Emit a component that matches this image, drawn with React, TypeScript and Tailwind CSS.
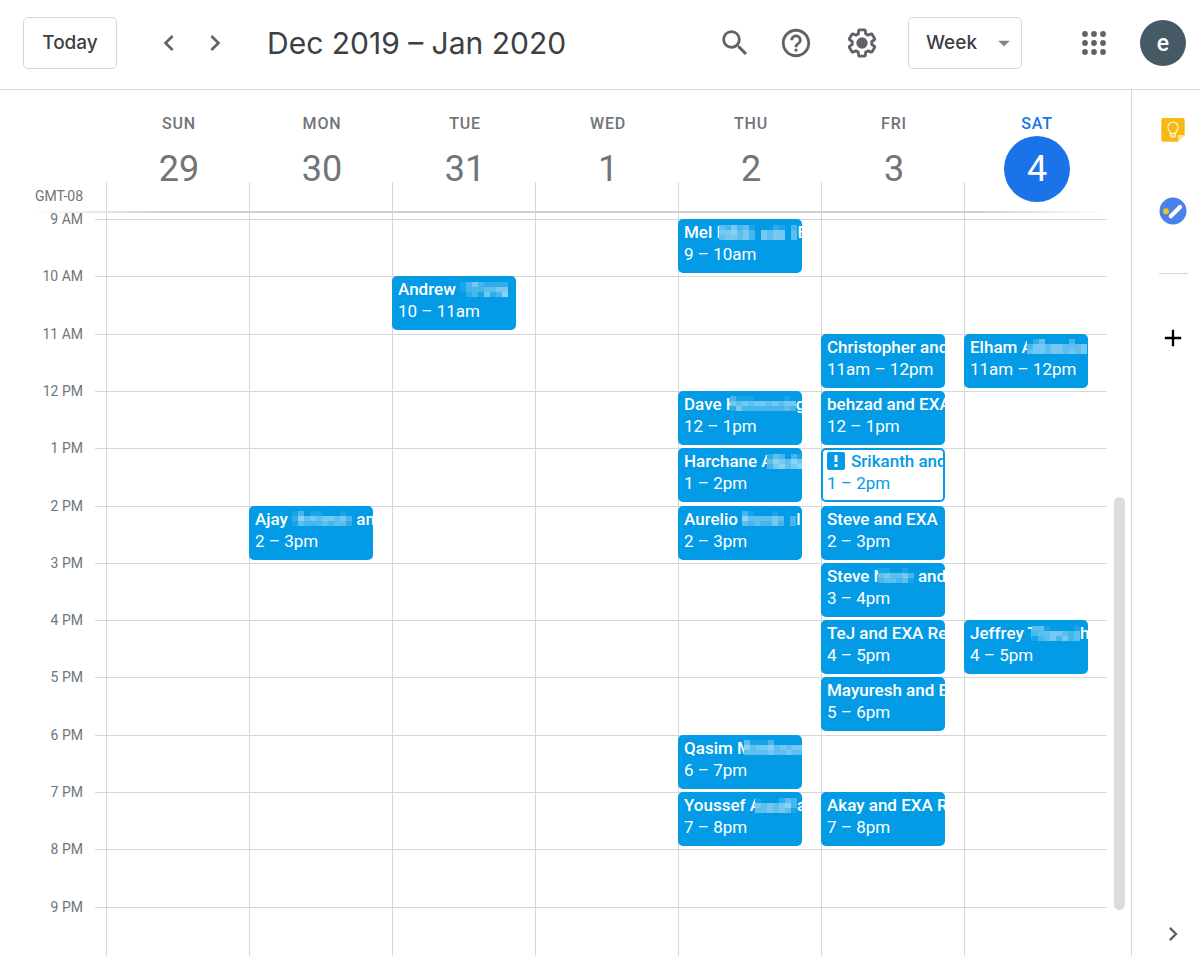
import React from "react";
import { MdChevronLeft, MdChevronRight, MdSearch, MdHelpOutline, MdAdd, MdArrowDropDown } from "react-icons/md";

type Overlap = "wide" | "stem" | "slight";
type Part = { text: string } | { mosaic: string[]; overlap?: Overlap };

type CalendarEvent = {
  start: number;
  time: string;
  title: Part[];
  pending?: boolean;
};

type Day = { name: string; date: number; today?: boolean; events: CalendarEvent[] };

const FIRST_HOUR = 9;
const HOURS = [
  "9 AM", "10 AM", "11 AM", "12 PM", "1 PM", "2 PM", "3 PM",
  "4 PM", "5 PM", "6 PM", "7 PM", "8 PM", "9 PM",
];

const DAYS: Day[] = [
  { name: "SUN", date: 29, events: [] },
  {
    name: "MON",
    date: 30,
    events: [
      {
        start: 14,
        time: "2 – 3pm",
        title: [{ text: "Ajay " }, { mosaic: ["1301100010", "2645455453", "1433343442"] }, { text: " an" }],
      },
    ],
  },
  {
    name: "TUE",
    date: 31,
    events: [
      {
        start: 10,
        time: "10 – 11am",
        title: [{ text: "Andrew " }, { mosaic: ["13532222", "13334455", "02315236"] }],
      },
    ],
  },
  { name: "WED", date: 1, events: [] },
  {
    name: "THU",
    date: 2,
    events: [
      {
        start: 9,
        time: "9 – 10am",
        title: [{ text: "Mel M" }, { mosaic: ["4353410002103", "5564530545504", "4554530545504"], overlap: "wide" }, { text: "E" }],
      },
      {
        start: 12,
        time: "12 – 1pm",
        title: [{ text: "Dave H" }, { mosaic: ["31110000010", "54545545455", "25333333343"], overlap: "stem" }, { text: "g" }],
      },
      {
        start: 13,
        time: "1 – 2pm",
        title: [{ text: "Harchane A" }, { mosaic: ["2430314", "4654655", "3564565"], overlap: "slight" }],
      },
      {
        start: 14,
        time: "2 – 3pm",
        title: [{ text: "Aurelio " }, { mosaic: ["310001000", "644445403", "434335303"] }, { text: "l" }],
      },
      {
        start: 18,
        time: "6 – 7pm",
        title: [{ text: "Qasim M" }, { mosaic: ["41113000000", "64556454554", "44445445445"], overlap: "stem" }],
      },
      {
        start: 19,
        time: "7 – 8pm",
        title: [{ text: "Youssef A" }, { mosaic: ["1000243", "5454563", "4454541"], overlap: "slight" }, { text: "a" }],
      },
    ],
  },
  {
    name: "FRI",
    date: 3,
    events: [
      { start: 11, time: "11am – 12pm", title: [{ text: "Christopher and" }] },
      { start: 12, time: "12 – 1pm", title: [{ text: "behzad and EXA" }] },
      { start: 13, time: "1 – 2pm", title: [{ text: "Srikanth and" }], pending: true },
      { start: 14, time: "2 – 3pm", title: [{ text: "Steve and EXA" }] },
      {
        start: 15,
        time: "3 – 4pm",
        title: [{ text: "Steve N" }, { mosaic: ["110010", "454453", "344341"], overlap: "stem" }, { text: " and" }],
      },
      { start: 16, time: "4 – 5pm", title: [{ text: "TeJ and EXA Re" }] },
      { start: 17, time: "5 – 6pm", title: [{ text: "Mayuresh and E" }] },
      { start: 19, time: "7 – 8pm", title: [{ text: "Akay and EXA R" }] },
    ],
  },
  {
    name: "SAT",
    date: 4,
    today: true,
    events: [
      {
        start: 11,
        time: "11am – 12pm",
        title: [{ text: "Elham A" }, { mosaic: ["0240000300", "3554554445", "4554554545"], overlap: "slight" }],
      },
      {
        start: 16,
        time: "4 – 5pm",
        title: [{ text: "Jeffrey T" }, { mosaic: ["44100001", "34455434", "13453534"], overlap: "slight" }, { text: "h" }],
      },
    ],
  },
];

const OVERLAP: Record<Overlap, string> = { wide: "-ml-3", stem: "-ml-2", slight: "-ml-1.5" };

function Mosaic({ rows, overlap }: { rows: string[]; overlap?: Overlap }) {
  const width = rows[0].length * 6;
  return (
    <svg
      aria-hidden="true"
      width={width}
      height={15}
      viewBox={`0 0 ${width} 15`}
      shapeRendering="crispEdges"
      className={`relative shrink-0 ${overlap ? OVERLAP[overlap] : ""}`}
    >
      <rect width={width} height={15} fill="#039be5" />
      {rows.flatMap((row, y) =>
        row.split("").map((level, x) => (
          <rect key={`${x}-${y}`} x={x * 6} y={y * 5} width={6} height={5} fill="#fff" fillOpacity={Number(level) * 0.09} />
        ))
      )}
    </svg>
  );
}

function EventCard({ event }: { event: CalendarEvent }) {
  const tone = event.pending
    ? "border-2 border-[#039be5] bg-white text-[#039be5] px-1"
    : "bg-[#039be5] text-white px-1.5 py-0.5";
  return (
    <button
      type="button"
      className={`-mt-px -ml-px mr-[19px] flex h-[54px] flex-col overflow-hidden rounded-[5px] text-left ${tone}`}
    >
      <span className="flex h-[22px] items-center whitespace-pre text-[17px] font-medium leading-[22px]">
        {event.pending && (
          <svg aria-hidden="true" width="18" height="18" viewBox="0 0 18 18" className="mr-1.5 shrink-0">
            <rect width="18" height="18" rx="2" fill="#039be5" />
            <path d="M7.5 3h3v7h-3zM7.5 12h3v3h-3z" fill="#fff" />
          </svg>
        )}
        {event.title.map((part, i) =>
          "text" in part ? <span key={i}>{part.text}</span> : <Mosaic key={i} rows={part.mosaic} overlap={part.overlap} />
        )}
      </span>
      <span className="whitespace-nowrap text-[17px] leading-[22px]">{event.time}</span>
    </button>
  );
}

function GearIcon() {
  return (
    <svg aria-hidden="true" viewBox="0 0 24 24" className="size-[34px]" fill="currentColor">
      <path d="M13.85 22.25h-3.7c-.74 0-1.36-.54-1.45-1.27l-.27-1.89c-.27-.14-.53-.29-.79-.46l-1.8.72c-.7.26-1.47-.03-1.81-.65L2.2 15.53c-.35-.66-.2-1.44.36-1.88l1.53-1.19c-.01-.15-.02-.3-.02-.46 0-.15.01-.31.02-.46l-1.52-1.19c-.59-.45-.74-1.26-.37-1.88l1.85-3.19c.34-.62 1.11-.9 1.79-.63l1.81.73c.26-.17.52-.32.78-.46l.27-1.91c.09-.7.71-1.25 1.44-1.25h3.7c.74 0 1.36.54 1.45 1.27l.27 1.89c.27.14.53.29.79.46l1.8-.72c.71-.26 1.48.03 1.82.65l1.84 3.18c.36.66.2 1.44-.36 1.88l-1.52 1.19c.01.15.02.3.02.46s-.01.31-.02.46l1.52 1.19c.56.45.72 1.23.37 1.86l-1.86 3.22c-.34.62-1.11.9-1.8.63l-1.8-.72c-.26.17-.52.32-.78.46l-.27 1.91c-.1.68-.72 1.22-1.46 1.22zm-3.23-2h2.76l.37-2.55.53-.22c.44-.18.88-.44 1.34-.78l.45-.34 2.38.96 1.38-2.4-2.03-1.58.07-.56c.03-.26.06-.51.06-.78s-.03-.53-.06-.78l-.07-.56 2.03-1.58-1.39-2.4-2.39.96-.45-.35c-.42-.32-.87-.58-1.33-.77l-.52-.22-.37-2.55h-2.76l-.37 2.55-.53.21c-.44.19-.88.44-1.34.79l-.45.33-2.38-.95-1.39 2.39 2.03 1.58-.07.56a7 7 0 0 0-.06.79c0 .26.02.53.06.78l.07.56-2.03 1.58 1.38 2.4 2.39-.96.45.35c.43.33.86.58 1.33.77l.53.22.38 2.55z" />
      <circle cx="12" cy="12" r="4" />
    </svg>
  );
}

function AppsIcon() {
  const steps = [3, 12, 21];
  return (
    <svg aria-hidden="true" viewBox="0 0 24 24" className="size-6" fill="currentColor">
      {steps.flatMap((y) => steps.map((x) => <circle key={`${x}-${y}`} cx={x} cy={y} r="2.9" />))}
    </svg>
  );
}

function KeepIcon() {
  return (
    <svg aria-hidden="true" viewBox="0 0 24 24" className="size-6">
      <path d="M2.5 0h19A2.2 2.2 0 0 1 23.7 2.2V17L17 23.7H2.5A2.2 2.2 0 0 1 .3 21.5V2.2A2.2 2.2 0 0 1 2.5 0z" fill="#f5b912" />
      <path d="M17 17h6.7L17 23.7z" fill="#fde293" />
      <path d="M9.5 15.5c0-2-2.6-3-2.6-6.2a5.1 5.1 0 0 1 10.2 0c0 3.2-2.6 4.2-2.6 6.2zM9.5 15.5v2.7h5v-2.7" fill="none" stroke="#fff3cf" strokeWidth="1.3" />
      <path d="M10.3 19.2h3.4" stroke="#fff3cf" strokeWidth="1.3" />
    </svg>
  );
}

function TasksIcon() {
  return (
    <svg aria-hidden="true" viewBox="0 0 28 28" className="size-7">
      <circle cx="14" cy="14" r="13.5" fill="#4a80ec" />
      <path d="M11.8 19.2L21 10" stroke="#fff" strokeWidth="4.2" strokeLinecap="round" />
      <circle cx="7" cy="14.3" r="3" fill="#f6bf26" />
    </svg>
  );
}

export default function App() {
  return (
    <div className="flex h-screen flex-col overflow-hidden bg-white font-[Roboto,sans-serif] text-[#70757a]">
      <header className="flex h-[90px] shrink-0 items-center border-b border-[#d5d7da] pr-3.5 pb-[3px] pl-[23px] text-[#5f6368]">
        <button type="button" className="h-[52px] w-[94px] rounded-[5px] border border-[#d5d7da] font-[Inter,sans-serif] text-[19px] font-medium text-[#3c4043]">
          Today
        </button>
        <nav aria-label="Week navigation" className="ml-9 flex gap-3.5">
          <button type="button" aria-label="Previous week"><MdChevronLeft className="size-8" /></button>
          <button type="button" aria-label="Next week"><MdChevronRight className="size-8" /></button>
        </nav>
        <h1 className="ml-9 whitespace-nowrap font-[Inter,sans-serif] text-[30px] leading-10 text-[#3c4043]">Dec 2019 – Jan 2020</h1>
        <div className="ml-auto flex items-center">
          <button type="button" aria-label="Search"><MdSearch className="size-[34px]" /></button>
          <button type="button" aria-label="Help" className="ml-[27px]"><MdHelpOutline className="size-[34px]" /></button>
          <button type="button" aria-label="Settings" className="ml-8"><GearIcon /></button>
          <div className="relative ml-[29px]">
            <select
              aria-label="View"
              defaultValue="Week"
              className="h-[52px] w-[114px] appearance-none rounded-[5px] border border-[#d5d7da] bg-white pl-[17px] font-[Inter,sans-serif] text-[19px] font-medium text-[#3c4043]"
            >
              <option>Day</option>
              <option>Week</option>
              <option>Month</option>
            </select>
            <MdArrowDropDown className="pointer-events-none absolute top-3 right-1 size-7 text-[#80868b]" />
          </div>
          <button type="button" aria-label="Apps" className="ml-[60px]"><AppsIcon /></button>
          <button type="button" aria-label="Account" className="ml-[34px] size-[46px] rounded-full bg-[#455a64] text-[23px] font-medium leading-none text-white">
            e
          </button>
        </div>
      </header>

      <div className="flex min-h-0 flex-1">
        <main className="flex min-w-0 flex-1 flex-col overflow-hidden">
          <div className="mr-6 flex h-[121px] shrink-0">
            <div className="flex w-[106px] shrink-0 items-end justify-end pr-[23px] pb-[5px] text-sm">GMT-08</div>
            <div className="grid flex-1 grid-cols-7">
              {DAYS.map((day) => (
                <div key={day.name} className="flex flex-col">
                  <div className="flex h-[92px] flex-col items-center pl-[3px]">
                    <div className={`mt-6 text-base font-medium leading-5 tracking-wider ${day.today ? "text-[#1a73e8]" : ""}`}>{day.name}</div>
                    <div
                      className={`mt-0.5 flex size-[66px] shrink-0 items-center justify-center rounded-full text-4xl ${
                        day.today ? "bg-[#1a73e8] text-white" : ""
                      }`}
                    >
                      {day.date}
                    </div>
                  </div>
                  <div className="flex-1 border-l border-[#d5d7da]" />
                </div>
              ))}
            </div>
          </div>
          <div className="mr-6 ml-8 h-0.5 shrink-0 bg-[linear-gradient(to_right,transparent,#cfd0d2_12%,#cfd0d2_88%,transparent)]" />
          <div className="flex min-h-0 flex-1 overflow-hidden">
            <div className="h-[751px] w-[106px] shrink-0 pt-1.5">
              <div className="grid h-[745px] grid-rows-[repeat(13,minmax(0,1fr))]">
                {HOURS.map((hour) => (
                  <div key={hour} className="flex items-start justify-end gap-3">
                    <span className="-mt-2.5 text-sm leading-5">{hour}</span>
                    <span className="w-[11px] border-t border-[#d5d7da]" />
                  </div>
                ))}
              </div>
            </div>
            <div className="grid min-h-0 flex-1 grid-cols-7">
              {DAYS.map((day) => (
                <div key={day.name} className="h-[751px] border-l border-[#d5d7da] pt-1.5">
                  <div className="grid h-[745px] grid-rows-[repeat(13,minmax(0,1fr))]">
                    {HOURS.map((hour, i) => {
                      const event = day.events.find((e) => e.start === FIRST_HOUR + i);
                      return (
                        <div key={hour} className="grid items-start border-t border-[#d5d7da]">
                          {event && <EventCard event={event} />}
                        </div>
                      );
                    })}
                  </div>
                </div>
              ))}
            </div>
            <div className="flex w-6 shrink-0 flex-col items-center pb-[46px]">
              <div className="mt-auto h-[413px] w-[11px] rounded-full bg-[#dadce0]" />
            </div>
          </div>
        </main>

        <aside className="flex w-[69px] shrink-0 flex-col items-center border-l border-[#d5d7da] pt-7 pl-3.5 pb-2">
          <button type="button" aria-label="Keep"><KeepIcon /></button>
          <button type="button" aria-label="Tasks" className="mt-[55px]"><TasksIcon /></button>
          <hr className="mt-12 w-[29px] border-t border-[#d5d7da]" />
          <button type="button" aria-label="Add" className="mt-[50px] text-black"><MdAdd className="size-7" /></button>
          <button type="button" aria-label="Collapse panel" className="mt-auto text-[#5f6368]"><MdChevronRight className="size-7" /></button>
        </aside>
      </div>
    </div>
  );
}
